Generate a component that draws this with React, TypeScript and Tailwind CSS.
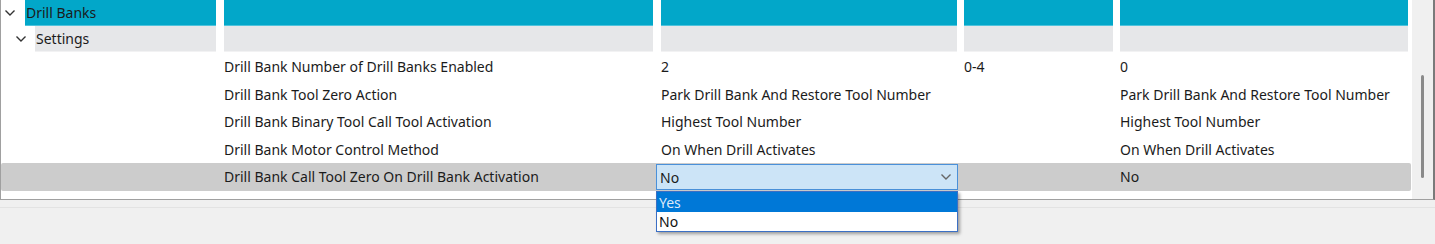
import React from 'react';

const font = { fontFamily: '"Noto Sans", "Open Sans", sans-serif' };

const rows = [
  ['Drill Bank Number of Drill Banks Enabled', '2', '0-4', '0'],
  ['Drill Bank Tool Zero Action', 'Park Drill Bank And Restore Tool Number', '', 'Park Drill Bank And Restore Tool Number'],
  ['Drill Bank Binary Tool Call Tool Activation', 'Highest Tool Number', '', 'Highest Tool Number'],
  ['Drill Bank Motor Control Method', 'On When Drill Activates', '', 'On When Drill Activates'],
  ['Drill Bank Call Tool Zero On Drill Bank Activation', 'No', '', 'No'],
];

const Chevron = ({ className }: { className?: string }) => (
  <svg width="10" height="6" viewBox="0 0 10 6" className={className}>
    <polyline points="0.5,0.5 5,5 9.5,0.5" fill="none" stroke="currentColor" strokeWidth="1.4" />
  </svg>
);

function HeaderRow({ tone, label, indent }: { tone: 'cyan' | 'gray'; label: string; indent: number }) {
  const cell =
    tone === 'cyan'
      ? 'bg-[#02a7c9] border-b border-[#4fc3dc]'
      : 'bg-[#e6e7e9] border-b border-[#f2f2f3]';
  return (
    <div className="flex h-[26px] items-stretch">
      <div className={indent === 24 ? 'w-[24px] flex items-center pl-[4px] text-[#333]' : 'w-[34px] flex items-center pl-[15px] text-[#333]'}>
        <Chevron />
      </div>
      <div className={`${cell} ${indent === 24 ? 'w-[191px]' : 'w-[181px]'} flex items-center pl-[1px] text-[14px] text-[#1b1b1b]`}>
        {label}
      </div>
      <div className="w-[8px]" />
      <div className={`${cell} w-[429px]`} />
      <div className="w-[8px]" />
      <div className={`${cell} w-[296px]`} />
      <div className="w-[7px]" />
      <div className={`${cell} w-[149px]`} />
      <div className="w-[7px]" />
      <div className={`${cell} w-[288px]`} />
    </div>
  );
}

export default function App() {
  return (
    <div className="relative w-[1435px] h-[244px] bg-[#f0f0f0] overflow-hidden" style={font}>
      <div className="flex h-[200px] bg-white border-l border-r-2 border-b border-l-[#a0a0a0] border-r-[#7a7a7a] border-b-[#a0a0a0]">
        <div className="flex-1 flex flex-col">
          <HeaderRow tone="cyan" label="Drill Banks" indent={24} />
          <HeaderRow tone="gray" label="Settings" indent={34} />
          <div className="h-[1px]" />
          {rows.map((r, i) => (
            <div
              key={i}
              className={`flex h-[27.5px] items-center text-[14px] text-[#1b1b1b] mr-[1px] ${i === 4 ? 'bg-[#cccccc] rounded-[2px]' : ''}`}
            >
              <div className="w-[223px] shrink-0" />
              <div className="w-[437px] shrink-0 whitespace-nowrap">{r[0]}</div>
              <div className="w-[303px] shrink-0 whitespace-nowrap">{i === 4 ? '' : r[1]}</div>
              <div className="w-[156px] shrink-0 whitespace-nowrap">{r[2]}</div>
              <div className="whitespace-nowrap">{r[3]}</div>
            </div>
          ))}
        </div>
        <div className="w-[21px] bg-[#f0f0f0] flex justify-center pt-[75px]">
          <div className="w-[3px] h-[103px] bg-[#8a8a8a] rounded-full" />
        </div>
      </div>
      <div className="h-[7px]" />
      <div className="h-[1px] bg-[#e3e3e3]" />

      {/* combo box editor */}
      <div className="absolute left-[656px] top-[164px] w-[302px] h-[26px] bg-[#cce4f7] border border-[#4a90d9] flex items-center justify-between pl-[3px] pr-[6px] text-[14px] text-[#1b1b1b]">
        <span>No</span>
        <Chevron className="text-[#666]" />
      </div>

      {/* dropdown list */}
      <div className="absolute left-[656px] top-[191px] w-[302px] h-[41px] bg-white border border-[#3b6fc4] shadow-[2px_2px_3px_rgba(0,0,0,0.35)] text-[14px] flex flex-col">
        <div className="h-[20px] bg-[#0078d7] text-[#dce9f9] flex items-center pl-[2px] pt-[1px]">Yes</div>
        <div className="h-[19px] text-[#111] flex items-center pl-[2px]">No</div>
      </div>
    </div>
  );
}
